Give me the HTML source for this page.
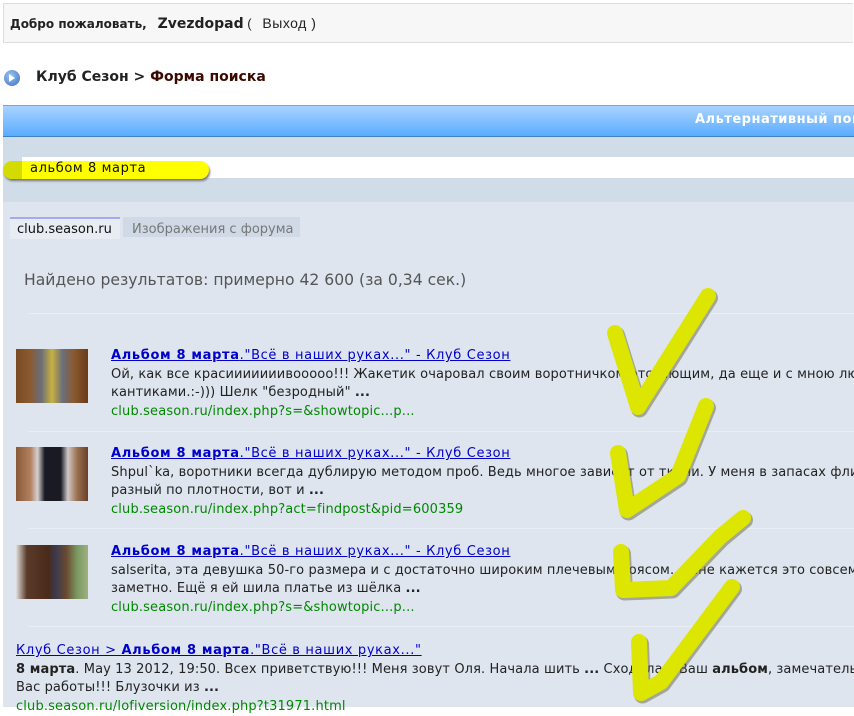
<!DOCTYPE html>
<html><head><meta charset="utf-8"><style>
body{margin:0;width:854px;height:707px;overflow:hidden;background:#fff;font-family:"DejaVu Sans","Liberation Sans",sans-serif;font-size:13px;color:#222;position:relative}
.a{position:absolute;white-space:nowrap}
a{color:#00c;text-decoration:underline;letter-spacing:0.65px}
.u{color:#080;letter-spacing:0.15px}
.r{letter-spacing:0.1px;overflow:hidden}
.sep{position:absolute;left:28px;width:826px;height:1px;background:#eaeef4}
.img{position:absolute;left:16px;width:72px;height:54px}
</style></head><body>
<div class="a" style="left:3px;top:3px;width:849px;height:38px;background:#f7f7f7;border:1px solid #ddd;border-right:none"></div>
<div class="a" style="left:10px;top:15px;font-size:13px;font-family:'Liberation Sans',sans-serif"><b style="font-family:'DejaVu Sans',sans-serif;font-size:12px">Добро пожаловать,</b> &nbsp; <b style="font-family:'DejaVu Sans',sans-serif;font-size:14px">Zvezdopad</b> ( &nbsp; <span style="font-size:14px;letter-spacing:0.5px">Выход )</span></div>
<div class="a" style="left:4px;top:70px;width:16px;height:16px;border-radius:50%;background:radial-gradient(circle at 40% 35%,#9cc4f0,#3a6fc0)"></div>
<div class="a" style="left:9px;top:74px;width:0;height:0;border-left:6px solid #fff;border-top:4px solid transparent;border-bottom:4px solid transparent"></div>
<div class="a" style="left:36px;top:69px;font-size:14px;font-weight:bold;color:#222">Клуб Сезон &gt; <span style="color:#3a0a00">Форма поиска</span></div>
<div class="a" style="left:3px;top:105px;width:851px;height:30px;background:linear-gradient(#a9d3ff,#5aacff);border-top:1px solid #6aa8e8;border-bottom:1px solid #3f7fc8"></div>
<div class="a" style="left:695px;top:112px;width:159px;overflow:hidden;font-size:13px;font-weight:bold;color:#fff;letter-spacing:0.5px">Альтернативный поиск</div>
<div class="a" style="left:3px;top:137px;width:851px;height:570px;background:#dee5ef"></div>
<div class="a" style="left:3px;top:137px;width:851px;height:65px;background:#d0dce8"></div>
<div class="a" style="left:22px;top:157px;width:832px;height:21px;background:#fff"></div>
<div class="a" style="left:3px;top:161px;width:206px;height:18px;border-radius:9px;background:#ffff00;box-shadow:1px 2px 2px #777"></div>
<div class="a" style="left:3px;top:161px;width:19px;height:18px;border-radius:9px 0 0 9px;background:#d4db00"></div>
<div class="a" style="left:30px;top:161px;font-size:13px;color:#111;letter-spacing:0.6px">альбом 8 марта</div>
<div class="a" style="left:10px;top:217px;width:110px;height:20px;background:#e8edf4;border-top:2px solid #a8a8f0"></div>
<div class="a" style="left:17px;top:222px;color:#111">club.season.ru</div>
<div class="a" style="left:123px;top:217px;width:177px;height:20px;background:#d0dae6"></div>
<div class="a" style="left:132px;top:222px;color:#777">Изображения с форума</div>
<div class="a" style="left:24px;top:271px;font-size:15.6px;color:#555">Найдено результатов: примерно 42 600 (за 0,34 сек.)</div>
<div class="sep" style="top:313px"></div>
<div class="img" style="top:349px;background:linear-gradient(90deg,#7a4a22 0,#8a5a30 20%,#6a6e7a 35%,#c8b040 50%,#6a6e7a 65%,#8a5a30 80%,#6a3a1a 100%)"></div>
<div class="a r" style="left:111px;width:743px;top:347px;line-height:18.5px"><a href="#"><b>Альбом 8 марта</b>."Всё в наших руках..." - Клуб Сезон</a><br>Ой, как все красииииииивооооо!!! Жакетик очаровал своим воротничком отстающим, да еще и с мною любовно<br>кантиками.:-))) Шелк "безродный" <b>...</b><br><span class="u">club.season.ru/index.php?s=&amp;showtopic...p...</span></div>
<div class="sep" style="top:431px"></div>
<div class="img" style="top:447px;background:linear-gradient(90deg,#8a5a38 0,#b08060 20%,#d8d0d0 30%,#1a1a24 40%,#1a1a24 62%,#d0c8c8 72%,#9a7050 85%,#6a4028 100%)"></div>
<div class="a r" style="left:111px;width:743px;top:445px;line-height:18.5px"><a href="#"><b>Альбом 8 марта</b>."Всё в наших руках..." - Клуб Сезон</a><br>Shpul`ka, воротники всегда дублирую методом проб. Ведь многое зависит от ткани. У меня в запасах флизелин<br>разный по плотности, вот и <b>...</b><br><span class="u">club.season.ru/index.php?act=findpost&amp;pid=600359</span></div>
<div class="sep" style="top:528px"></div>
<div class="img" style="top:545px;background:linear-gradient(90deg,#e0e0e0 0,#5a3a28 15%,#4a2a1a 45%,#3a3a50 55%,#6a4a30 70%,#7a9a60 85%,#a0b080 100%)"></div>
<div class="a r" style="left:111px;width:743px;top:543px;line-height:18.5px"><a href="#"><b>Альбом 8 марта</b>."Всё в наших руках..." - Клуб Сезон</a><br>salserita, эта девушка 50-го размера и с достаточно широким плечевым поясом... Мне кажется это совсем не<br>заметно. Ещё я ей шила платье из шёлка <b>...</b><br><span class="u">club.season.ru/index.php?s=&amp;showtopic...p...</span></div>
<div class="sep" style="top:626px"></div>
<div class="a r" style="left:16px;width:838px;top:642px;line-height:18.5px"><a href="#">Клуб Сезон &gt; <b>Альбом 8 марта</b>."Всё в наших руках..."</a><br><b>8 марта</b>. May 13 2012, 19:50. Всех приветствую!!! Меня зовут Оля. Начала шить <b>...</b> Сходила в Ваш <b>альбом</b>, замечательные<br>Вас работы!!! Блузочки из <b>...</b><br><span class="u">club.season.ru/lofiversion/index.php?t31971.html</span></div>
<svg class="a" style="left:0;top:0" width="854" height="707">
<g fill="none" stroke-linecap="round" stroke-linejoin="round">
<g stroke="#6a6a40" stroke-width="17" opacity="0.5" transform="translate(1.5,2)">
<path d="M615 333 L638 407 L708 296"/><path d="M618 453 L627 510 L678 476 L706 406"/><path d="M621 552 L623 590 L671 588 L720 537 L743 518"/><path d="M639 642 L641 693 L661 682 L732 587"/>
</g>
<g stroke="#dde600" stroke-width="16">
<path d="M615 333 L638 407 L708 296"/><path d="M618 453 L627 510 L678 476 L706 406"/><path d="M621 552 L623 590 L671 588 L720 537 L743 518"/><path d="M639 642 L641 693 L661 682 L732 587"/>
</g></g></svg>
</body></html>
